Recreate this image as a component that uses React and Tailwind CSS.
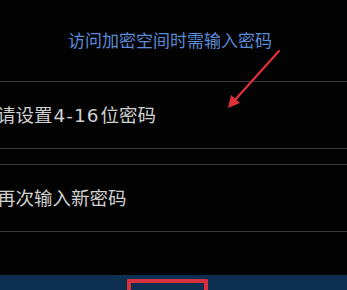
export default function App() {
    return (
        <div className="relative w-[347px] h-[290px] overflow-hidden bg-[#030303]" style={{ fontFamily: '"Noto Sans CJK SC", "Noto Sans", sans-serif' }}>
            {/* hint */}
            <div className="h-[81px] pt-[27px] pl-[68px]">
                <span className="text-[17px] leading-[26px] text-[#5a8bd9]">访问加密空间时需输入密码</span>
            </div>
            <div className="h-px bg-[#3a3a3a]" />

            {/* password */}
            <div className="h-[66px] flex items-center -ml-[3px]">
                <span className="text-[18.5px] text-[#d0d0d0]">
                    请设置<span className="font-['DejaVu_Sans'] tracking-[1px] mx-[1px]">4-16</span>位密码
                </span>
            </div>
            <div className="h-px bg-[#3a3a3a]" />
            <div className="h-[15px]" />
            <div className="h-px bg-[#3a3a3a]" />

            {/* confirm */}
            <div className="h-[66px] flex items-center -ml-[3px]">
                <span className="text-[18.5px] text-[#d0d0d0]">再次输入新密码</span>
            </div>
            <div className="h-px bg-[#3a3a3a]" />
            <div className="h-[43px]" />

            {/* bottom bar */}
            <div className="h-[15px] bg-[#0d2f50] pt-[4px] pl-[127px]">
                <div className="w-[81px] h-[20px] border-[4px] border-[#d8303e] rounded-[1px]" />
            </div>

            {/* red arrow */}
            <svg className="absolute left-0 top-0 pointer-events-none" width="347" height="290">
                <line x1="279" y1="51" x2="234" y2="101" stroke="#e0303a" strokeWidth="2.2" strokeLinecap="round" />
                <polygon points="228,108 231,95 240,103" fill="#e0303a" />
            </svg>
        </div>
    );
}
